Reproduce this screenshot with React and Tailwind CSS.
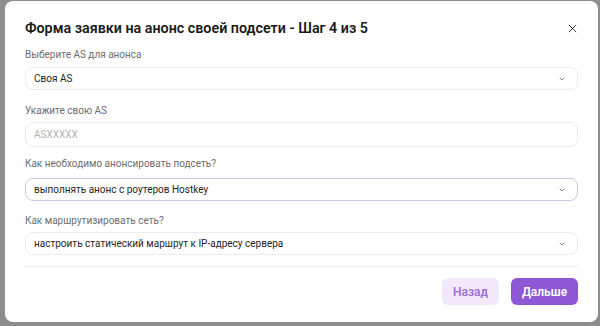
import React from 'react';

const Chevron = () => (
  <svg width="8" height="8" viewBox="0 0 24 24" fill="none" stroke="#6b6b6b" strokeWidth="2.5" strokeLinecap="round" strokeLinejoin="round">
    <path d="M6 9l6 6 6-6" />
  </svg>
);

const Select = ({ value, focused = false }) => (
  <div
    className={`flex h-[23px] items-center justify-between rounded-[8px] border pl-[8px] pr-[11px] text-[10px] text-[#1f1f1f] ${
      focused ? 'border-[#cfc7e8]' : 'border-[#ececec]'
    }`}
  >
    <span>{value}</span>
    <Chevron />
  </div>
);

const Label = ({ children, className = '' }) => (
  <div className={`text-[10px] leading-[14px] text-[#6e6e6e] ${className}`}>{children}</div>
);

export default function App() {
  return (
    <div
      className="h-[326px] w-[600px] bg-[#8d8d8d] pl-[5px] pt-[1px]"
      style={{ fontFamily: 'Roboto, "Noto Sans", sans-serif' }}
    >
      <div className="flex h-[321px] w-[593px] flex-col rounded-[8px] bg-white pl-[20px] pr-[20px]">
        <div className="mt-[17px] flex h-[20px] items-center justify-between">
          <h1 className="text-[14.3px] font-semibold leading-[20px] text-[#1a1a1a]">
            Форма заявки на анонс своей подсети - Шаг 4 из 5
          </h1>
          <svg width="9" height="9" viewBox="0 0 10 10" className="mr-[1px]" stroke="#3a3a3a" strokeWidth="1.1">
            <path d="M1 1l8 8M9 1l-8 8" />
          </svg>
        </div>

        <Label className="mt-[10px]">Выберите AS для анонса</Label>
        <div className="mt-[5px]">
          <Select value="Своя AS" />
        </div>

        <Label className="mt-[14px]">Укажите свою AS</Label>
        <div className="mt-[4px] flex h-[25px] items-center rounded-[8px] border border-[#ececec] pl-[8px] text-[10px] text-[#b4b4b4]">
          ASXXXXX
        </div>

        <Label className="mt-[10px]">Как необходимо анонсировать подсеть?</Label>
        <div className="mt-[7px]">
          <Select value="выполнять анонс с роутеров Hostkey" focused />
        </div>

        <Label className="mt-[13px]">Как маршрутизировать сеть?</Label>
        <div className="mt-[4px]">
          <Select value="настроить статический маршрут к IP-адресу сервера" />
        </div>

        <div className="mt-[11px] h-[1px] bg-[#efefef]" />

        <div className="mt-[11px] flex justify-end gap-[12px]">
          <button className="flex h-[27px] w-[57px] items-center justify-center rounded-[6px] bg-[#f1e8fb] text-[12px] font-semibold text-[#9d72d8]">
            Назад
          </button>
          <button className="flex h-[27px] w-[67px] items-center justify-center rounded-[6px] bg-[#8d57d6] text-[12px] font-semibold text-white">
            Дальше
          </button>
        </div>
      </div>
    </div>
  );
}
